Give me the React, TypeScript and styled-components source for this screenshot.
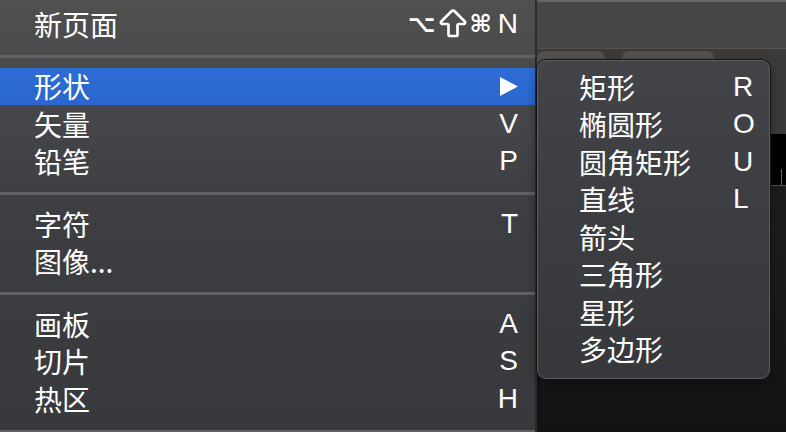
import React from 'react';
import styled, { createGlobalStyle } from 'styled-components';
import { ArrowBigUp } from 'lucide-react';

const GlobalStyle = createGlobalStyle`
  html, body {
    margin: 0;
    padding: 0;
    background: #121315;
    overflow: hidden;
  }
  * { box-sizing: border-box; }
`;

const Screen = styled.div`
  position: relative;
  display: flex;
  width: 786px;
  height: 432px;
  overflow: hidden;
  font-family: "Liberation Sans", "Noto Sans CJK SC", sans-serif;
  color: #fff;
`;

const Menu = styled.div`
  width: 537px;
  flex-shrink: 0;
  display: flex;
  flex-direction: column;
  padding-top: 5px;
  background: linear-gradient(180deg, #505050 0%, #45474a 25%, #3c3e41 50%, #37393c 100%);
  border-right: 2px solid #2a2b2d;
`;

const Item = styled.div<{ $active?: boolean }>`
  height: 37.5px;
  flex-shrink: 0;
  display: flex;
  align-items: center;
  justify-content: space-between;
  padding: 0 17px 0 34px;
  background: ${(p) => (p.$active ? 'linear-gradient(180deg, #2e6dd6, #2a66cd)' : 'transparent')};
`;

const Label = styled.span`
  font-family: "Noto Sans CJK SC", sans-serif;
  font-size: 28px;
  line-height: 1;
  color: #fff;
`;

const Key = styled.span`
  font-family: "Liberation Sans", "DejaVu Sans", sans-serif;
  font-size: 28px;
  line-height: 1;
  color: #fff;
`;

const Combo = styled.span`
  display: flex;
  align-items: center;
  gap: 6px;
  line-height: 1;
  color: #fff;
`;

const Glyph = styled.span<{ $size: number }>`
  font-family: "DejaVu Sans", sans-serif;
  font-weight: bold;
  font-size: ${(p) => p.$size}px;
  line-height: 1;
`;

const Shift = styled(ArrowBigUp)`
  margin: 0 -7px;
  display: block;
`;

const Separator = styled.div`
  height: 3px;
  flex-shrink: 0;
  margin: 12px 0 10px;
  background: #616264;
`;

const Backdrop = styled.div`
  flex: 1;
  display: flex;
  flex-direction: column;
`;

const Toolbar = styled.div`
  height: 48px;
  background: #484644;
  border-top: 2px solid #676562;
`;

const TabStrip = styled.div`
  height: 86px;
  display: flex;
  align-items: flex-start;
  gap: 17px;
  padding-top: 2px;
  background: #3d3b39;
  border-top: 1px solid #55534f;
`;

const Tab = styled.div<{ $w: number }>`
  width: ${(p) => p.$w}px;
  height: 40px;
  border-radius: 7px 7px 0 0;
  background: #53514f;
`;

const Ruler = styled.div`
  height: 52px;
  display: flex;
  justify-content: flex-end;
  align-items: flex-end;
  padding-right: 4px;
  background: #000;
  border-bottom: 1px solid #4c4c4c;
`;

const Tick = styled.div`
  width: 1px;
  height: 16px;
  background: #666;
`;

const Canvas = styled.div`
  flex: 1;
  background: linear-gradient(180deg, #1c1d1f 0%, #17181a 60%, #121315 100%);
`;

const Submenu = styled.div`
  position: absolute;
  left: 537px;
  top: 60px;
  width: 233px;
  height: 319px;
  padding: 7px 0 12px;
  border-radius: 9px;
  background: linear-gradient(180deg, #434447 0%, #3b3d40 50%, #36383b 100%);
  border: 1px solid #5a5b5d;
  box-shadow: 0 0 0 1px #141414, 0 4px 12px rgba(0, 0, 0, 0.4);
`;

const SubItem = styled.div`
  height: 37.5px;
  display: grid;
  grid-template-columns: 154px 1fr;
  align-items: center;
  padding-left: 41px;
`;

const Arrow = () => (
  <svg width="18" height="19" viewBox="0 0 18 19">
    <polygon points="0,0 18,9.5 0,19" fill="#fff" />
  </svg>
);

const mainGroups: { label: string; key?: string; active?: boolean }[][] = [
  [{ label: '新页面' }],
  [{ label: '形状', active: true }, { label: '矢量', key: 'V' }, { label: '铅笔', key: 'P' }],
  [{ label: '字符', key: 'T' }, { label: '图像...' }],
  [{ label: '画板', key: 'A' }, { label: '切片', key: 'S' }, { label: '热区', key: 'H' }],
];

const shapes = [
  { label: '矩形', key: 'R' },
  { label: '椭圆形', key: 'O' },
  { label: '圆角矩形', key: 'U' },
  { label: '直线', key: 'L' },
  { label: '箭头' },
  { label: '三角形' },
  { label: '星形' },
  { label: '多边形' },
];

export default function App() {
  return (
    <>
      <GlobalStyle />
      <Screen>
        <Menu>
          {mainGroups.map((group, gi) => (
            <React.Fragment key={gi}>
              {gi > 0 && <Separator />}
              {group.map((item) => (
                <Item key={item.label} $active={item.active}>
                  <Label>{item.label}</Label>
                  {item.label === '新页面' ? (
                    <Combo>
                      <Glyph $size={24}>⌥</Glyph>
                      <Shift size={36} strokeWidth={1.8} color="#fff" />
                      <Glyph $size={24}>⌘</Glyph>
                      <Key>N</Key>
                    </Combo>
                  ) : item.active ? (
                    <Arrow />
                  ) : (
                    item.key && <Key>{item.key}</Key>
                  )}
                </Item>
              ))}
            </React.Fragment>
          ))}
          <Separator />
        </Menu>
        <Backdrop>
          <Toolbar />
          <TabStrip>
            <Tab $w={68} />
            <Tab $w={92} />
          </TabStrip>
          <Ruler>
            <Tick />
          </Ruler>
          <Canvas />
        </Backdrop>
        <Submenu>
          {shapes.map((s) => (
            <SubItem key={s.label}>
              <Label>{s.label}</Label>
              {s.key && <Key>{s.key}</Key>}
            </SubItem>
          ))}
        </Submenu>
      </Screen>
    </>
  );
}
